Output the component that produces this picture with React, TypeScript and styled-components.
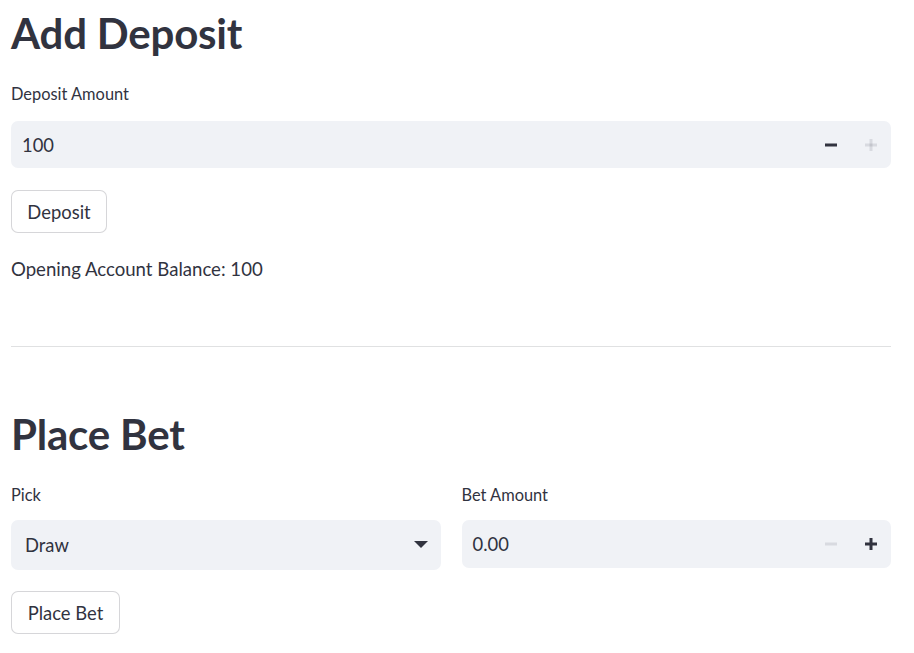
import React from "react";
import styled, { createGlobalStyle } from "styled-components";

const Global = createGlobalStyle`
  html, body { margin: 0; padding: 0; background: #ffffff; }
  body { font-family: "Lato", "Liberation Sans", sans-serif; color: rgb(49, 51, 63); }
  * { box-sizing: border-box; }
`;

const Page = styled.main`
  width: 914px;
  padding: 0 23px 0 11px;
  display: flex;
  flex-direction: column;
`;

const Title = styled.h1<{ $top: number }>`
  margin: ${(p) => p.$top}px 0 0 0;
  font-size: 42px;
  font-weight: 700;
  line-height: 60px;
  letter-spacing: -0.2px;
  color: rgb(49, 51, 63);
`;

const Field = styled.div<{ $top: number }>`
  display: flex;
  flex-direction: column;
  margin-top: ${(p) => p.$top}px;
  flex: 1;
  min-width: 0;
`;

const Label = styled.label<{ $gap?: number }>`
  font-size: 16.4px;
  line-height: 20px;
  height: 20px;
  margin-bottom: ${(p) => p.$gap ?? 17}px;
`;

const InputBox = styled.div<{ $h: number }>`
  height: ${(p) => p.$h}px;
  background: rgb(240, 242, 246);
  border-radius: 7px;
  display: flex;
  align-items: center;
  padding-left: 11px;
  font-size: 18.4px;
`;

const Value = styled.span<{ $pad?: number }>`
  flex: 1;
  padding-left: ${(p) => p.$pad ?? 0}px;
`;

const StepBtn = styled.span<{ $dim?: boolean }>`
  width: 40px;
  height: 100%;
  display: flex;
  align-items: center;
  justify-content: center;
  color: ${(p) => (p.$dim ? "rgba(49,51,63,0.12)" : "rgb(49,51,63)")};
`;

const Button = styled.button<{ $top: number; $w: number }>`
  margin-top: ${(p) => p.$top}px;
  width: ${(p) => p.$w}px;
  height: 43px;
  border: 1px solid rgba(49, 51, 63, 0.2);
  border-radius: 7px;
  background: #ffffff;
  font-family: inherit;
  font-size: 18.4px;
  color: rgb(49, 51, 63);
  padding: 0;
`;

const Text = styled.p`
  margin: 24px 0 0 0;
  font-size: 18.6px;
  line-height: 24px;
`;

const Divider = styled.hr`
  margin: 65px 0 0 0;
  border: none;
  border-top: 1px solid rgba(49, 51, 63, 0.15);
  height: 0;
`;

const Row = styled.div`
  display: flex;
  gap: 21px;
  align-items: flex-start;
`;

const Minus = () => (
  <svg width="12" height="12" viewBox="0 0 12 12">
    <rect x="0" y="4.5" width="12" height="3" fill="currentColor" />
  </svg>
);
const Plus = () => (
  <svg width="12" height="12" viewBox="0 0 12 12">
    <rect x="0" y="4.5" width="12" height="3" fill="currentColor" />
    <rect x="4.5" y="0" width="3" height="12" fill="currentColor" />
  </svg>
);
const Caret = () => (
  <svg width="14" height="8" viewBox="0 0 14 8">
    <path d="M0 0 L14 0 L7 7 Z" fill="rgb(49,51,63)" />
  </svg>
);

export default function App() {
  return (
    <>
      <Global />
      <Page>
        <Title $top={3}>Add Deposit</Title>
        <Field $top={21}>
          <Label>Deposit Amount</Label>
          <InputBox $h={47}>
            <Value>100</Value>
            <StepBtn><Minus /></StepBtn>
            <StepBtn $dim><Plus /></StepBtn>
          </InputBox>
        </Field>
        <Button $top={22} $w={96}>Deposit</Button>
        <Text>Opening Account Balance: 100</Text>
        <Divider />
        <Title $top={57}>Place Bet</Title>
        <Row>
          <Field $top={21}>
            <Label $gap={15}>Pick</Label>
            <InputBox $h={50}>
              <Value $pad={3}>Draw</Value>
              <StepBtn><Caret /></StepBtn>
            </InputBox>
          </Field>
          <Field $top={21}>
            <Label $gap={15}>Bet Amount</Label>
            <InputBox $h={48}>
              <Value>0.00</Value>
              <StepBtn $dim><Minus /></StepBtn>
              <StepBtn><Plus /></StepBtn>
            </InputBox>
          </Field>
        </Row>
        <Button $top={21} $w={109}>Place Bet</Button>
      </Page>
    </>
  );
}
